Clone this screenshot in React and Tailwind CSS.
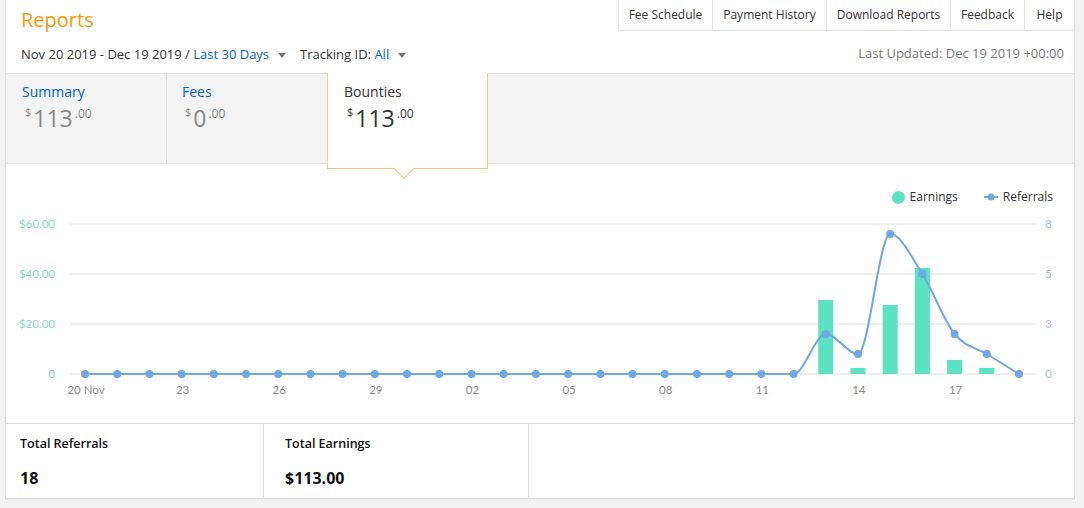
import React from "react";

const FONT = { fontFamily: '"Open Sans", "Noto Sans", Arial, sans-serif' };
const CHART_FONT = { fontFamily: 'Lato, "Open Sans", sans-serif' };

const X0 = 85;
const STEP = (1019 - 85) / 29;
const BASE = 373;

// referral line (pixel y), one value per day from 20 Nov to 19 Dec
const refY = Array.from({ length: 30 }, () => BASE);
refY[23] = 333;
refY[24] = 353;
refY[25] = 233;
refY[26] = 273;
refY[27] = 333;
refY[28] = 353;

// earnings bars: [day index, top y]
const bars = [
  [23, 299],
  [24, 367],
  [25, 304],
  [26, 267],
  [27, 359],
  [28, 367],
];

const xLabels = [
  [0, "20 Nov"],
  [3, "23"],
  [6, "26"],
  [9, "29"],
  [12, "02"],
  [15, "05"],
  [18, "08"],
  [21, "11"],
  [24, "14"],
  [27, "17"],
];

function monotonePath(xs, ys) {
  const n = xs.length;
  const sign = (v) => (v < 0 ? -1 : 1);
  const t = new Array(n).fill(0);
  for (let i = 1; i < n - 1; i++) {
    const h0 = xs[i] - xs[i - 1];
    const h1 = xs[i + 1] - xs[i];
    const s0 = (ys[i] - ys[i - 1]) / h0;
    const s1 = (ys[i + 1] - ys[i]) / h1;
    const p = (s0 * h1 + s1 * h0) / (h0 + h1);
    t[i] =
      (sign(s0) + sign(s1)) *
        Math.min(Math.abs(s0), Math.abs(s1), 0.5 * Math.abs(p)) || 0;
  }
  const h = xs[1] - xs[0];
  t[0] = (3 * (ys[1] - ys[0])) / h / 2 - t[1] / 2;
  const hl = xs[n - 1] - xs[n - 2];
  t[n - 1] = (3 * (ys[n - 1] - ys[n - 2])) / hl / 2 - t[n - 2] / 2;
  let d = `M${xs[0]},${ys[0]}`;
  for (let i = 0; i < n - 1; i++) {
    const dx = (xs[i + 1] - xs[i]) / 3;
    d += ` C${xs[i] + dx},${ys[i] + dx * t[i]} ${xs[i + 1] - dx},${
      ys[i + 1] - dx * t[i + 1]
    } ${xs[i + 1]},${ys[i + 1]}`;
  }
  return d;
}

function Caret() {
  return (
    <svg width="8" height="5" viewBox="0 0 8 5" className="ml-[9px] mt-[2px]">
      <path d="M0 0 L8 0 L4 5 Z" fill="#777" />
    </svg>
  );
}

function Amount({ whole, active }) {
  return (
    <div
      className={`flex items-start mt-[3px] ml-[3px] ${
        active ? "text-[#333]" : "text-[#888]"
      }`}
    >
      <span className="text-[11px] leading-none mt-[1px] mr-[2px]">$</span>
      <span className="text-[23px] leading-[26px]">{whole}</span>
      <span className="text-[12px] leading-none mt-[3px] ml-[2px]">.00</span>
    </div>
  );
}

function Chart() {
  const xs = refY.map((_, i) => X0 + i * STEP);
  const d = monotonePath(xs, refY);
  const grid = [223, 273, 323, 373];
  const leftLabels = ["$60.00", "$40.00", "$20.00", "0"];
  const rightLabels = ["8", "5", "3", "0"];
  return (
    <svg
      width="1068"
      height="210"
      viewBox="6 212 1068 210"
      className="block"
      style={CHART_FONT}
    >
      {grid.map((y) => (
        <line key={y} x1="70" x2="1037" y1={y} y2={y} stroke="#dedede" strokeWidth="1" />
      ))}
      {grid.map((y, i) => (
        <text key={`l${y}`} x="55" y={y + 4} textAnchor="end" fontSize="11.5" fill="#86d9c6">
          {leftLabels[i]}
        </text>
      ))}
      {grid.map((y, i) => (
        <text key={`r${y}`} x="1045" y={y + 4} fontSize="11.5" fill="#a3bdea">
          {rightLabels[i]}
        </text>
      ))}
      {bars.map(([i, top]) => (
        <rect
          key={i}
          x={X0 + i * STEP - 7.5}
          y={top}
          width="15"
          height={BASE - top}
          fill="#5ae2c2"
        />
      ))}
      <path d={d} fill="none" stroke="#6fa6e6" strokeWidth="2" />
      {xs.map((x, i) => (
        <circle key={i} cx={x} cy={refY[i]} r="4" fill="#6fa6e6" />
      ))}
      {xLabels.map(([i, label]) => (
        <text
          key={label}
          x={X0 + i * STEP + 1}
          y="393"
          textAnchor="middle"
          fontSize="11.5"
          fill="#8a8a8a"
        >
          {label}
        </text>
      ))}
    </svg>
  );
}

export default function App() {
  return (
    <div className="min-h-[508px] bg-[#f2f2f2]" style={FONT}>
      <div className="ml-[5px] w-[1070px] h-[499px] bg-white border-x border-b border-[#dcdcdc] flex flex-col shadow-[0_1px_1px_rgba(0,0,0,0.04)]">
        {/* header */}
        <div className="h-[73px] flex flex-col">
          <div className="flex justify-between">
            <div className="pl-[15px] pt-[7px] text-[20px] leading-[26px] text-[#ff9900]">
              Reports
            </div>
            <div className="flex h-[31px] border-b border-[#e3e3e3] text-[12px] text-[#333]">
              {[
                ["Fee Schedule", "w-[94px]"],
                ["Payment History", "w-[114px]"],
                ["Download Reports", "w-[124px]"],
                ["Feedback", "w-[74px]"],
                ["Help", "w-[50px]"],
              ].map(([label, w]) => (
                <div
                  key={label}
                  className={`${w} border-l border-[#e3e3e3] flex items-center justify-center`}
                >
                  {label}
                </div>
              ))}
            </div>
          </div>
          <div className="flex justify-between items-center mt-[12px] pl-[15px] pr-[10px]">
            <div className="flex items-center text-[13px] text-[#333]">
              <span>Nov 20 2019 - Dec 19 2019 /&nbsp;</span>
              <span className="text-[#0066c0]">Last 30 Days</span>
              <Caret />
              <span className="ml-[14px]">Tracking ID:&nbsp;</span>
              <span className="text-[#0066c0]">All</span>
              <Caret />
            </div>
            <div className="text-[13px] text-[#777] -mt-[2px]">
              Last Updated: Dec 19 2019 +00:00
            </div>
          </div>
        </div>

        {/* tabs */}
        <div className="relative h-[91px] bg-[#f3f3f3] border-y border-[#e2e2e2] flex">
          <div className="w-[161px] border-r border-[#dedede] pl-[16px] pt-[8px]">
            <div className="text-[14px] text-[#0066c0] leading-[20px]">Summary</div>
            <Amount whole="113" />
          </div>
          <div className="w-[161px] pl-[15px] pt-[8px]">
            <div className="text-[14px] text-[#0066c0] leading-[20px]">Fees</div>
            <Amount whole="0" />
          </div>
          <div className="absolute left-[321px] -top-px w-[161px] h-[96px] bg-white border-x border-b border-[#f8ca78] pl-[16px] pt-[9px]">
            <div className="text-[14px] text-[#333] leading-[20px]">Bounties</div>
            <Amount whole="113" active />
            <div className="absolute left-[69px] -bottom-[8px] w-[14px] h-[14px] bg-white border-r border-b border-[#f8ca78] rotate-45" />
          </div>
        </div>

        {/* chart */}
        <div className="h-[259px] flex flex-col">
          <div className="flex justify-end items-center gap-[26px] pr-[21px] pt-[17px] h-[49px] text-[12px] text-[#333]">
            <div className="flex items-center">
              <span className="w-[13px] h-[13px] rounded-full bg-[#5ae2c2] mr-[5px]" />
              Earnings
            </div>
            <div className="flex items-center">
              <svg width="14" height="8" viewBox="0 0 14 8" className="mr-[5px]">
                <line x1="0" y1="4" x2="14" y2="4" stroke="#6fa6e6" strokeWidth="2" />
                <circle cx="7" cy="4" r="3.5" fill="#6fa6e6" />
              </svg>
              Referrals
            </div>
          </div>
          <Chart />
        </div>

        {/* totals */}
        <div className="flex-1 flex border-t border-[#dedede]">
          <div className="w-[258px] border-r border-[#dedede] pl-[14px] pt-[11px]">
            <div className="text-[12.5px] font-semibold text-[#111]">Total Referrals</div>
            <div className="text-[16px] font-bold text-[#111] mt-[12px]">18</div>
          </div>
          <div className="w-[265px] border-r border-[#dedede] pl-[21px] pt-[11px]">
            <div className="text-[12.5px] font-semibold text-[#111]">Total Earnings</div>
            <div className="text-[16px] font-bold text-[#111] mt-[12px]">$113.00</div>
          </div>
          <div className="flex-1" />
        </div>
      </div>
    </div>
  );
}
